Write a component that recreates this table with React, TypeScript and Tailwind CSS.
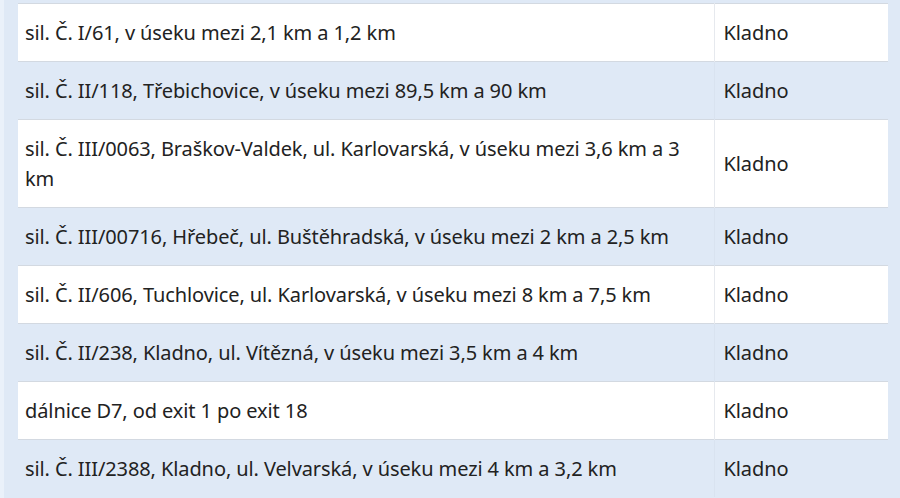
const rows = [
  "sil. Č. I/61, v úseku mezi 2,1 km a 1,2 km",
  "sil. Č. II/118, Třebichovice, v úseku mezi 89,5 km a 90 km",
  "sil. Č. III/0063, Braškov-Valdek, ul. Karlovarská, v úseku mezi 3,6 km a 3 km",
  "sil. Č. III/00716, Hřebeč, ul. Buštěhradská, v úseku mezi 2 km a 2,5 km",
  "sil. Č. II/606, Tuchlovice, ul. Karlovarská, v úseku mezi 8 km a 7,5 km",
  "sil. Č. II/238, Kladno, ul. Vítězná, v úseku mezi 3,5 km a 4 km",
  "dálnice D7, od exit 1 po exit 18",
  "sil. Č. III/2388, Kladno, ul. Velvarská, v úseku mezi 4 km a 3,2 km",
];

export default function App() {
  return (
    <div
      className="min-h-screen bg-[#dfe9f6] border-l-4 border-[#eaf1fa] pt-[3px] pl-[14px] pr-[12px] text-[#222] overflow-hidden"
      style={{ fontFamily: '"Noto Sans", sans-serif' }}
    >
      <table className="w-full border-collapse text-[20px] leading-[30px] tracking-[-0.1px]">
        <tbody>
          {rows.map((road, i) => {
            const white = i % 2 === 0;
            return (
              <tr
                key={i}
                className={white ? "bg-white border-y border-[#d3d9e1]" : ""}
              >
                <td className="pl-[7px] pr-4 py-[13.5px] align-middle">{road}</td>
                <td
                  className={
                    "w-[174px] pl-[9px] py-[13.5px] align-middle border-l " +
                    (white ? "border-[#e6e9ee]" : "border-[#d9e3f0]")
                  }
                >
                  Kladno
                </td>
              </tr>
            );
          })}
        </tbody>
      </table>
    </div>
  );
}
